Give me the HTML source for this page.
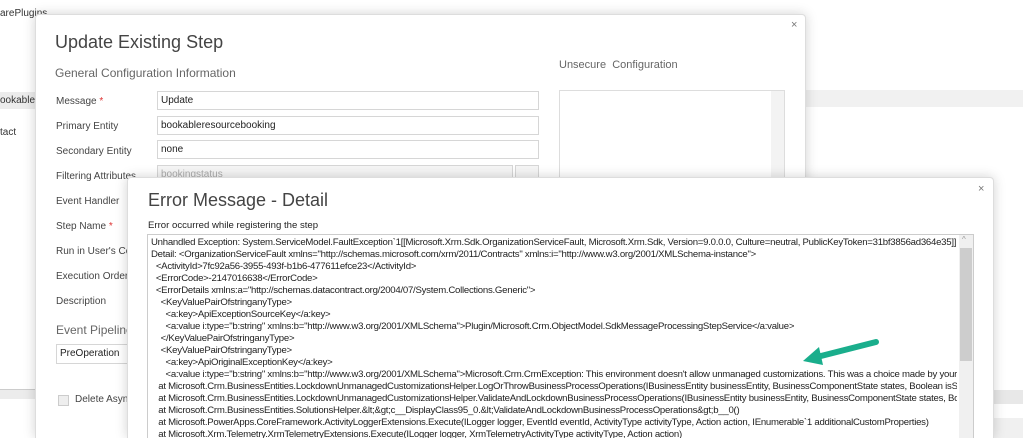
<!DOCTYPE html>
<html style="overflow:hidden;height:438px"><head><meta charset="utf-8"><style>
*{margin:0;padding:0;box-sizing:border-box}
html,body{width:1023px;height:438px;overflow:hidden}
body{background:#fff;font-family:"Segoe UI","Liberation Sans",sans-serif;position:relative;color:#333}
.a{position:absolute;white-space:nowrap}
.lbl{font-size:10px;color:#444}
.inp{position:absolute;border:1px solid #d6d6d6;background:#fff;height:19px;font-size:10px;padding:3px 3px;color:#222}
.req{color:#d33}
.dlg{position:absolute;background:#fff;border:1px solid #ddd;border-bottom:none;border-radius:4px 4px 0 0;box-shadow:0 0 12px rgba(0,0,0,.18);overflow:hidden}
.pre{font-size:9.6px;line-height:12px;color:#222;letter-spacing:-0.25px}
</style></head><body>
<div class="a" style="left:0;top:8px;font-size:10px;color:#333">arePlugins</div>
<div class="a" style="left:0;top:92px;width:35px;height:17px;background:#ececec"></div>
<div class="a" style="left:0;top:95px;font-size:10px;color:#333">ookabler</div>
<div class="a" style="left:0;top:127px;font-size:10px;color:#333">tact</div>
<div class="a" style="left:805px;top:90px;width:218px;height:17px;background:#f1f1f1"></div>
<div class="a" style="left:0;top:389px;width:35px;height:10px;background:#ececec;border-top:1px solid #ccc"></div>
<div class="a" style="left:993px;top:390px;width:30px;height:48px;background:linear-gradient(#e8e8e8 0,#e8e8e8 14px,#fff 14px,#fff 28px,#f0f0f0 28px)"></div>

<div class="dlg" style="left:35px;top:14px;width:771px;height:424px">
  <div class="a" style="left:755px;top:4px;font-size:11px;color:#777">×</div>
  <div class="a" style="left:19px;top:17px;font-size:18px;color:#444;font-weight:300">Update Existing Step</div>
  <div class="a" style="left:19px;top:51px;font-size:12px;color:#666">General Configuration Information</div>
  <div class="a lbl" style="left:20px;top:81px">Message <span class="req">*</span></div>
  <div class="a lbl" style="left:20px;top:106px">Primary Entity</div>
  <div class="a lbl" style="left:20px;top:131px">Secondary Entity</div>
  <div class="a lbl" style="left:20px;top:156px">Filtering Attributes</div>
  <div class="a lbl" style="left:20px;top:181px">Event Handler</div>
  <div class="a lbl" style="left:20px;top:206px">Step Name <span class="req">*</span></div>
  <div class="a lbl" style="left:20px;top:231px">Run in User's Con</div>
  <div class="a lbl" style="left:20px;top:256px">Execution Order <span class="req">*</span></div>
  <div class="a lbl" style="left:20px;top:281px">Description</div>
  <div class="a" style="left:20px;top:308px;font-size:12px;color:#666">Event Pipeline</div>
  <div class="inp" style="left:20px;top:329px;width:80px;height:20px">PreOperation</div>
  <div class="a" style="left:22px;top:380px;width:11px;height:11px;border:1px solid #ccc;background:#eee"></div>
  <div class="a lbl" style="left:39px;top:379px">Delete AsyncC</div>
  <div class="inp" style="left:121px;top:76px;width:382px">Update</div>
  <div class="inp" style="left:121px;top:101px;width:382px">bookableresourcebooking</div>
  <div class="inp" style="left:121px;top:125px;width:382px">none</div>
  <div class="inp" style="left:121px;top:150px;width:356px;background:#f5f5f5;color:#aaa">bookingstatus</div>
  <div class="inp" style="left:479px;top:150px;width:24px;background:#f5f5f5"></div>
  <div class="a" style="left:523px;top:44px;font-size:11px;color:#666">Unsecure&nbsp; Configuration</div>
  <div class="a" style="left:523px;top:75px;width:226px;height:120px;border:1px solid #ddd"><div class="a" style="right:0;top:0;width:13px;height:120px;background:#f3f3f3"></div></div>
</div>

<div class="dlg" style="left:127px;top:177px;width:867px;height:261px">
  <div class="a" style="left:850px;top:5px;font-size:11px;color:#777">×</div>
  <div class="a" style="left:20px;top:12px;font-size:18px;color:#444;font-weight:300">Error Message - Detail</div>
  <div class="a" style="left:20px;top:42px;font-size:9.6px;color:#222">Error occurred while registering the step</div>
  <div class="a" style="left:19px;top:56px;width:827px;height:205px;border:1px solid #ccc;border-bottom:none;overflow:hidden">
    <div class="a" style="right:0;top:0;width:14px;height:205px;background:#f0f0f0"><div class="a" style="left:1px;top:13px;width:12px;height:113px;background:#cdcdcd"></div><div class="a" style="left:3px;top:0;font-size:8px;color:#999">^</div></div>
    <div class="a pre" style="left:3px;top:2px;width:806px;height:203px;overflow:hidden">Unhandled Exception: System.ServiceModel.FaultException`1[[Microsoft.Xrm.Sdk.OrganizationServiceFault, Microsoft.Xrm.Sdk, Version=9.0.0.0, Culture=neutral, PublicKeyToken=31bf3856ad364e35]]: This e<br>Detail: &lt;OrganizationServiceFault xmlns="http://schemas.microsoft.com/xrm/2011/Contracts" xmlns:i="http://www.w3.org/2001/XMLSchema-instance"&gt;<br>&nbsp; &lt;ActivityId&gt;7fc92a56-3955-493f-b1b6-477611efce23&lt;/ActivityId&gt;<br>&nbsp; &lt;ErrorCode&gt;-2147016638&lt;/ErrorCode&gt;<br>&nbsp; &lt;ErrorDetails xmlns:a="http://schemas.datacontract.org/2004/07/System.Collections.Generic"&gt;<br>&nbsp; &nbsp; &lt;KeyValuePairOfstringanyType&gt;<br>&nbsp; &nbsp; &nbsp; &lt;a:key&gt;ApiExceptionSourceKey&lt;/a:key&gt;<br>&nbsp; &nbsp; &nbsp; &lt;a:value i:type="b:string" xmlns:b="http://www.w3.org/2001/XMLSchema"&gt;Plugin/Microsoft.Crm.ObjectModel.SdkMessageProcessingStepService&lt;/a:value&gt;<br>&nbsp; &nbsp; &lt;/KeyValuePairOfstringanyType&gt;<br>&nbsp; &nbsp; &lt;KeyValuePairOfstringanyType&gt;<br>&nbsp; &nbsp; &nbsp; &lt;a:key&gt;ApiOriginalExceptionKey&lt;/a:key&gt;<br>&nbsp; &nbsp; &nbsp; &lt;a:value i:type="b:string" xmlns:b="http://www.w3.org/2001/XMLSchema"&gt;Microsoft.Crm.CrmException: This environment doesn't allow unmanaged customizations. This was a choice made by your a<br>&nbsp; &nbsp;at Microsoft.Crm.BusinessEntities.LockdownUnmanagedCustomizationsHelper.LogOrThrowBusinessProcessOperations(IBusinessEntity businessEntity, BusinessComponentState states, Boolean isSolution<br>&nbsp; &nbsp;at Microsoft.Crm.BusinessEntities.LockdownUnmanagedCustomizationsHelper.ValidateAndLockdownBusinessProcessOperations(IBusinessEntity businessEntity, BusinessComponentState states, Boolean i<br>&nbsp; &nbsp;at Microsoft.Crm.BusinessEntities.SolutionsHelper.&amp;lt;&amp;gt;c__DisplayClass95_0.&amp;lt;ValidateAndLockdownBusinessProcessOperations&amp;gt;b__0()<br>&nbsp; &nbsp;at Microsoft.PowerApps.CoreFramework.ActivityLoggerExtensions.Execute(ILogger logger, EventId eventId, ActivityType activityType, Action action, IEnumerable`1 additionalCustomProperties)<br>&nbsp; &nbsp;at Microsoft.Xrm.Telemetry.XrmTelemetryExtensions.Execute(ILogger logger, XrmTelemetryActivityType activityType, Action action)</div>
  </div>
</div>

<svg class="a" style="left:795px;top:332px" width="95" height="36" viewBox="0 0 95 36">
  <line x1="81" y1="10" x2="22" y2="25" stroke="#1aae8c" stroke-width="6" stroke-linecap="round"/>
  <polygon points="8,29 24,15 28,33" fill="#1aae8c"/>
</svg>
</body></html>
